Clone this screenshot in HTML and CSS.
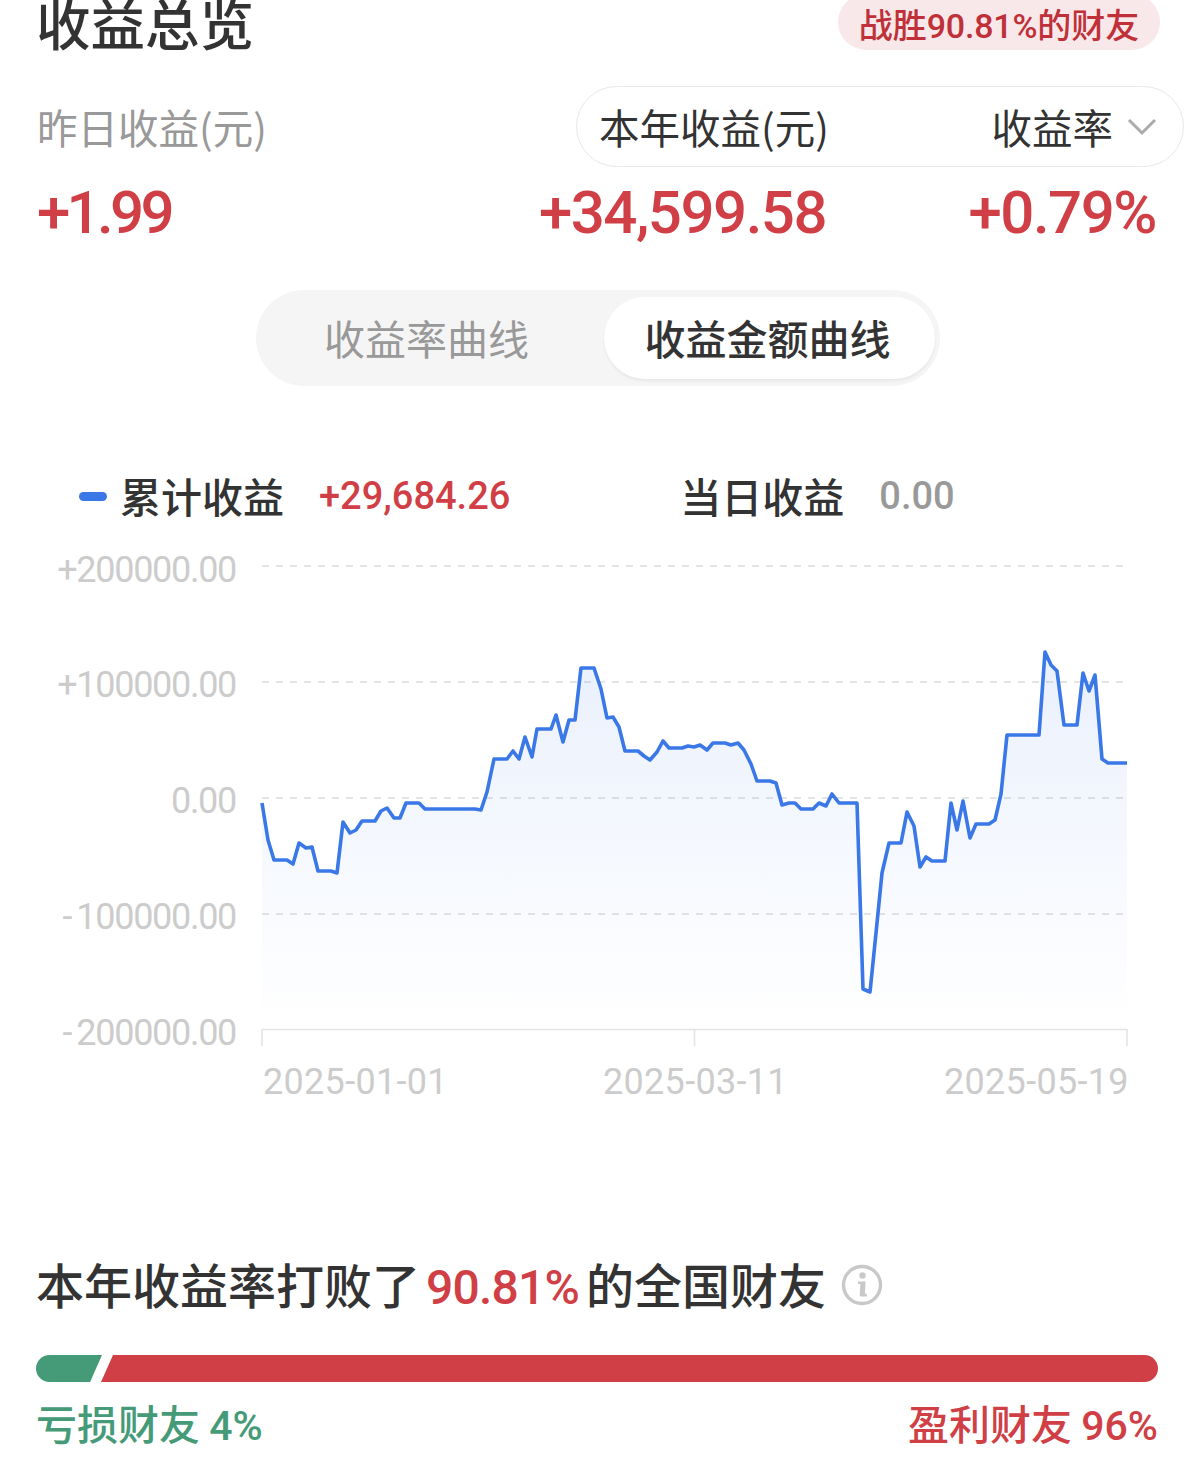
FILE: index.html
```html
<!DOCTYPE html>
<html lang="zh-CN">
<head>
<meta charset="utf-8">
<title>收益总览</title>
<link rel="stylesheet" href="styles.css">
</head>
<body>
<main class="page">
  <header class="head">
    <h1 class="title">收益总览</h1>
    <div class="beat-pill">战胜<span class="num">90.81%</span>的财友</div>
  </header>

  <section class="labels">
    <div class="label muted">昨日收益(元)</div>
    <div class="range-box">
      <span class="label">本年收益(元)</span>
      <span class="rate-select">
        <span class="label">收益率</span>
        <svg class="chevron" viewBox="0 0 30 18" width="30" height="18"><path d="M2 2 L15 15 L28 2" fill="none" stroke="#aaa" stroke-width="3"/></svg>
      </span>
    </div>
  </section>

  <section class="values">
    <div class="value value-day">+1.99</div>
    <div class="value value-year">+34,599.58</div>
    <div class="value value-rate">+0.79%</div>
  </section>

  <nav class="tabs">
    <div class="tab">收益率曲线</div>
    <div class="tab tab-on">收益金额曲线</div>
  </nav>

  <section class="legend">
    <span class="dash"></span>
    <span class="legend-name">累计收益</span>
    <span class="legend-val red">+29,684.26</span>
    <span class="legend-name second">当日收益</span>
    <span class="legend-val gray">0.00</span>
  </section>

  <svg class="chart" viewBox="0 550 1199 560" width="1199" height="560">
    <defs>
      <linearGradient id="fade" gradientUnits="userSpaceOnUse" x1="0" y1="650" x2="0" y2="1025">
        <stop offset="0" stop-color="#3b78e7" stop-opacity=".11"/>
        <stop offset="1" stop-color="#3b78e7" stop-opacity="0"/>
      </linearGradient>
    </defs>
    <g class="grid">
      <line x1="262" x2="1127" y1="566" y2="566"/>
      <line x1="262" x2="1127" y1="682" y2="682"/>
      <line x1="262" x2="1127" y1="798" y2="798"/>
      <line x1="262" x2="1127" y1="914" y2="914"/>
    </g>
    <g class="axis">
      <line x1="262" x2="1127" y1="1029.5" y2="1029.5"/>
      <line x1="262" x2="262" y1="1029" y2="1046"/>
      <line x1="694.5" x2="694.5" y1="1029" y2="1046"/>
      <line x1="1127" x2="1127" y1="1029" y2="1046"/>
    </g>
    <polygon fill="url(#fade)" points="262,803 268,840 274,860 287,860 293,864 299,843 306,848 312,847 318,871 331,871 337,873 343,822 350,833 356,830 362,821 375,821 381,811 387,808 394,818 400,818 406,803 419,803 425,809 475,809 481,810 487,792 494,759 507,759 513,751 519,759 525,737 532,757 537,729 551,729 556,715 563,742 569,720 575,720 581,668 594,668 601,689 607,718 613,717 619,727 625,751 638,751 644,756 650,760 657,752 663,741 669,748 682,748 688,746 694,747 700,745 707,750 713,743 725,743 731,745 738,743 744,750 751,764 757,781 770,781 776,783 782,805 789,803 795,803 801,809 813,809 819,803 826,806 832,794 839,803 857,803 863,989 870,992 876,933 882,873 889,843 901,843 907,812 914,826 920,867 926,857 932,861 945,861 951,803 957,830 963,801 970,838 976,824 989,824 995,820 1001,794 1007,735 1039,735 1045,652 1051,665 1057,671 1064,725 1077,725 1083,673 1089,691 1095,675 1102,759 1108,763 1127,763 1127,1030 262,1030"/>
    <polyline class="line" points="262,803 268,840 274,860 287,860 293,864 299,843 306,848 312,847 318,871 331,871 337,873 343,822 350,833 356,830 362,821 375,821 381,811 387,808 394,818 400,818 406,803 419,803 425,809 475,809 481,810 487,792 494,759 507,759 513,751 519,759 525,737 532,757 537,729 551,729 556,715 563,742 569,720 575,720 581,668 594,668 601,689 607,718 613,717 619,727 625,751 638,751 644,756 650,760 657,752 663,741 669,748 682,748 688,746 694,747 700,745 707,750 713,743 725,743 731,745 738,743 744,750 751,764 757,781 770,781 776,783 782,805 789,803 795,803 801,809 813,809 819,803 826,806 832,794 839,803 857,803 863,989 870,992 876,933 882,873 889,843 901,843 907,812 914,826 920,867 926,857 932,861 945,861 951,803 957,830 963,801 970,838 976,824 989,824 995,820 1001,794 1007,735 1039,735 1045,652 1051,665 1057,671 1064,725 1077,725 1083,673 1089,691 1095,675 1102,759 1108,763 1127,763"/>
    <g class="ylab">
      <text x="236" y="582">+200000.00</text>
      <text x="236" y="697">+100000.00</text>
      <text x="236" y="813">0.00</text>
      <text x="236" y="929"><tspan class="minus">-</tspan>100000.00</text>
      <text x="236" y="1045"><tspan class="minus">-</tspan>200000.00</text>
    </g>
    <g class="xlab">
      <text x="263" y="1094">2025-01-01</text>
      <text x="603" y="1094">2025-03-11</text>
      <text x="944" y="1094">2025-05-19</text>
    </g>
  </svg>

  <section class="beat">
    <h2 class="beat-title">本年收益率打败了<span class="beat-num">90.81%</span>的全国财友</h2>
    <svg class="info" viewBox="0 0 42 42" width="42" height="42">
      <circle cx="21" cy="21" r="18.5" fill="none" stroke="#c8c8c8" stroke-width="3.4"/>
      <circle cx="21.5" cy="11.5" r="3.2" fill="#c8c8c8"/>
      <path d="M17 17.5 H24.5 L24 28 Q24 30.5 26 30.5 V32.5 H20 Q18.6 32.5 18.7 30.5 L19.4 20 H17 Z" fill="#c8c8c8"/>
    </svg>
  </section>

  <div class="bar">
    <div class="bar-loss"></div>
    <div class="bar-gain"></div>
  </div>

  <footer class="bar-labels">
    <span class="green">亏损财友 <span class="num">4%</span></span>
    <span class="red">盈利财友 <span class="num">96%</span></span>
  </footer>
</main>
</body>
</html>
```

FILE: styles.css
```css
* { box-sizing: border-box; }
html, body { margin: 0; padding: 0; background: #fff; }
.page {
  width: 1199px;
  height: 1464px;
  overflow: hidden;
  font-family: "Noto Sans CJK SC", "Noto Sans", sans-serif;
  color: #333;
}
.num, .value, .legend-val, .beat-num, .ylab, .xlab {
  font-family: Roboto, "Noto Sans CJK SC", sans-serif;
}
.head {
  display: flex;
  justify-content: space-between;
  align-items: flex-start;
  height: 86px;
  margin-top: -6px;
  padding: 0 39px 0 36px;
  margin-bottom: 6px;
}
.title {
  margin: -2px 0 0;
  font-size: 54.5px;
  line-height: 60px;
  font-weight: 500;
  color: #333;
}
.beat-pill {
  width: 322px;
  height: 56px;
  padding-top: 8px;
  border-radius: 28px;
  background: #f8e8ea;
  color: #bf3038;
  font-size: 34px;
  line-height: 43px;
  text-align: center;
  font-weight: 500;
  white-space: nowrap;
}
.beat-pill .num { letter-spacing: -.2px; }
.labels {
  display: flex;
  justify-content: space-between;
  align-items: center;
  height: 81px;
  padding: 0 15px 0 37px;
}
.label {
  font-size: 40.5px;
  line-height: 50px;
  font-weight: 400;
  color: #333;
  white-space: nowrap;
}
.label.muted { color: #999; }
.range-box {
  display: flex;
  justify-content: space-between;
  align-items: center;
  width: 608px;
  height: 81px;
  padding: 0 26px 0 22px;
  border: 1px solid #e8e8e8;
  border-radius: 41px;
}
.rate-select { display: flex; align-items: center; gap: 14px; }
.chevron { display: block; }
.values {
  display: flex;
  height: 90px;
  padding: 2px 43px 0 37px;
  align-items: center;
}
.value {
  font-size: 60px;
  line-height: 70px;
  font-weight: 500;
  color: #d13f46;
  letter-spacing: -1.5px;
  white-space: nowrap;
}
.value-day { flex: 1; letter-spacing: -3.7px; }
.value-rate { width: 330px; text-align: right; }
.tabs {
  display: flex;
  justify-content: space-between;
  align-items: center;
  width: 684px;
  height: 96px;
  margin: 33px 0 0 256px;
  padding: 0 5px 0 0;
  background: #f5f5f5;
  border-radius: 48px;
}
.tab {
  width: 340px;
  padding: 0 0 2px 68px;
  font-size: 41px;
  line-height: 50px;
  color: #999;
  white-space: nowrap;
}
.tab-on {
  width: 331px;
  height: 82px;
  padding: 0 4px 2px 0;
  line-height: 80px;
  text-align: center;
  background: #fff;
  color: #333;
  font-weight: 500;
  border-radius: 41px;
  box-shadow: 0 2px 3px rgba(0, 0, 0, .06);
}
.legend {
  display: flex;
  align-items: center;
  height: 50px;
  margin-top: 85px;
  padding-left: 79px;
}
.dash {
  width: 28px;
  height: 9px;
  margin-right: 13px;
  border-radius: 5px;
  background: #3b78e7;
}
.legend-name {
  padding-bottom: 3px;
  font-size: 41px;
  line-height: 50px;
  font-weight: 500;
  color: #333;
  white-space: nowrap;
}
.legend-name.second { margin-left: 170px; }
.legend-val {
  margin-left: 35px;
  font-size: 38px;
  line-height: 50px;
  font-weight: 500;
  white-space: nowrap;
}
.red { color: #d13f46; }
.green { color: #459a78; }
.gray { color: #999; }
.chart { display: block; margin-top: 29px; }
.grid line { stroke: #e4e4e4; stroke-width: 2; stroke-dasharray: 7 7; }
.axis line { stroke: #e2e4e8; stroke-width: 1.6; }
.line { fill: none; stroke: #3b78e7; stroke-width: 3.6; stroke-linejoin: round; }
.ylab text { text-anchor: end; fill: #ccc; font-size: 36px; letter-spacing: -1.3px; }
.ylab .minus { letter-spacing: 4px; }
.xlab text { fill: #ccc; font-size: 36px; letter-spacing: .3px; }
.beat {
  display: flex;
  align-items: center;
  gap: 15px;
  height: 60px;
  margin-top: 145px;
  padding-left: 36px;
}
.beat-title {
  margin: 0;
  font-size: 48px;
  line-height: 60px;
  font-weight: 500;
  color: #333;
  white-space: nowrap;
}
.beat-num { color: #d13f46; margin: 0 7px 0 6px; letter-spacing: -.8px; }
.info { display: block; }
.bar {
  display: flex;
  height: 27px;
  margin: 40px 41px 0 36px;
}
.bar-loss {
  width: 66px;
  background: #459a78;
  border-radius: 13.5px 0 0 13.5px;
  clip-path: polygon(0 0, 100% 0, 82% 100%, 0 100%);
}
.bar-gain {
  flex: 1;
  margin-left: -1px;
  background: #d13f46;
  border-radius: 0 13.5px 13.5px 0;
  clip-path: polygon(12px 0, 100% 0, 100% 100%, 0 100%);
}
.bar-labels {
  display: flex;
  justify-content: space-between;
  margin-top: 15px;
  padding: 0 41px 0 36px;
  font-size: 41px;
  line-height: 50px;
  font-weight: 500;
}
```
